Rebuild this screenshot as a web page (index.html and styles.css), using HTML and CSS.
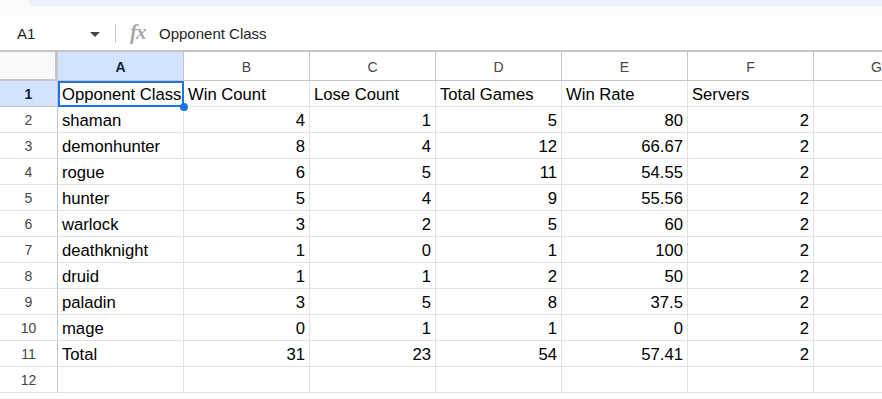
FILE: index.html
```html
<!DOCTYPE html>
<html lang="en">
<head>
    <meta charset="UTF-8">
    <meta name="viewport" content="width=device-width, initial-scale=1.0">
    <title>Opponent Stats</title>
    <link rel="stylesheet" href="styles.css">
</head>
<body>

<div class="topstrip">
    <div class="toolbar"></div>
</div>

<div class="formulabar">
    <div class="namebox">A1</div>
    <div class="dropdown"></div>
    <div class="divider"></div>
    <div class="fx">fx</div>
    <div class="formula">Opponent Class</div>
</div>

<div class="viewport">
<div class="sheet">
    <!-- column headers -->
    <div class="corner"></div>
    <div class="colhead active">A</div>
    <div class="colhead">B</div>
    <div class="colhead">C</div>
    <div class="colhead">D</div>
    <div class="colhead">E</div>
    <div class="colhead">F</div>
    <div class="colhead">G</div>

    <div class="rowhead active">1</div>
    <div class="cell selected">Opponent Class</div>
    <div class="cell">Win Count</div>
    <div class="cell">Lose Count</div>
    <div class="cell">Total Games</div>
    <div class="cell">Win Rate</div>
    <div class="cell">Servers</div>
    <div class="cell"></div>

    <div class="rowhead">2</div>
    <div class="cell">shaman</div>
    <div class="cell num">4</div>
    <div class="cell num">1</div>
    <div class="cell num">5</div>
    <div class="cell num">80</div>
    <div class="cell num">2</div>
    <div class="cell"></div>

    <div class="rowhead">3</div>
    <div class="cell">demonhunter</div>
    <div class="cell num">8</div>
    <div class="cell num">4</div>
    <div class="cell num">12</div>
    <div class="cell num">66.67</div>
    <div class="cell num">2</div>
    <div class="cell"></div>

    <div class="rowhead">4</div>
    <div class="cell">rogue</div>
    <div class="cell num">6</div>
    <div class="cell num">5</div>
    <div class="cell num">11</div>
    <div class="cell num">54.55</div>
    <div class="cell num">2</div>
    <div class="cell"></div>

    <div class="rowhead">5</div>
    <div class="cell">hunter</div>
    <div class="cell num">5</div>
    <div class="cell num">4</div>
    <div class="cell num">9</div>
    <div class="cell num">55.56</div>
    <div class="cell num">2</div>
    <div class="cell"></div>

    <div class="rowhead">6</div>
    <div class="cell">warlock</div>
    <div class="cell num">3</div>
    <div class="cell num">2</div>
    <div class="cell num">5</div>
    <div class="cell num">60</div>
    <div class="cell num">2</div>
    <div class="cell"></div>

    <div class="rowhead">7</div>
    <div class="cell">deathknight</div>
    <div class="cell num">1</div>
    <div class="cell num">0</div>
    <div class="cell num">1</div>
    <div class="cell num">100</div>
    <div class="cell num">2</div>
    <div class="cell"></div>

    <div class="rowhead">8</div>
    <div class="cell">druid</div>
    <div class="cell num">1</div>
    <div class="cell num">1</div>
    <div class="cell num">2</div>
    <div class="cell num">50</div>
    <div class="cell num">2</div>
    <div class="cell"></div>

    <div class="rowhead">9</div>
    <div class="cell">paladin</div>
    <div class="cell num">3</div>
    <div class="cell num">5</div>
    <div class="cell num">8</div>
    <div class="cell num">37.5</div>
    <div class="cell num">2</div>
    <div class="cell"></div>

    <div class="rowhead">10</div>
    <div class="cell">mage</div>
    <div class="cell num">0</div>
    <div class="cell num">1</div>
    <div class="cell num">1</div>
    <div class="cell num">0</div>
    <div class="cell num">2</div>
    <div class="cell"></div>

    <div class="rowhead">11</div>
    <div class="cell">Total</div>
    <div class="cell num">31</div>
    <div class="cell num">23</div>
    <div class="cell num">54</div>
    <div class="cell num">57.41</div>
    <div class="cell num">2</div>
    <div class="cell"></div>

    <div class="rowhead">12</div>
    <div class="cell"></div>
    <div class="cell"></div>
    <div class="cell"></div>
    <div class="cell"></div>
    <div class="cell"></div>
    <div class="cell"></div>
    <div class="cell"></div>
</div>
</div>

</body>
</html>
```

FILE: styles.css
```css
/* spreadsheet view */

body {
    font-family: "Liberation Sans", Arial, sans-serif;
    background-color: #fff;
    margin: 0;
    padding: 0;
    overflow: hidden;
    color: #000;
}

.topstrip {
    height: 16px;
    background-color: #f9fbfd;
}
.toolbar {
    margin-left: 28px;
    height: 6px;
    background-color: #edf2fa;
    border-bottom-left-radius: 12px;
}

.formulabar {
    height: 34px;
    display: flex;
    align-items: center;
    font-size: 15px;
    color: #1f1f1f;
}
.namebox {
    padding-left: 17px;
    width: 73px;
}
.dropdown {
    width: 0;
    height: 0;
    border-left: 5px solid transparent;
    border-right: 5px solid transparent;
    border-top: 5px solid #444746;
    margin-top: 2px;
}
.divider {
    width: 1px;
    height: 19px;
    background-color: #c4c7c5;
    margin-left: 15px;
    margin-right: 14px;
}
.fx {
    font-family: "Liberation Serif", serif;
    font-style: italic;
    font-weight: bold;
    font-size: 21px;
    color: #a8a8a8;
    letter-spacing: -1px;
    width: 29px;
    margin-top: -2px;
}

.viewport {
    width: 882px;
    overflow: hidden;
}
.sheet {
    display: grid;
    grid-template-columns: 58px repeat(7, 126px);
    grid-template-rows: 29px;
    grid-auto-rows: 26px;
    width: 940px;
    border-top: 2px solid #c4c7c5;
}

.corner {
    background-color: #f8f9fa;
    border-right: 3px solid #c4c7c5;
    border-bottom: 4px solid #c4c7c5;
    box-sizing: border-box;
    margin-bottom: -2px;
}
.colhead, .rowhead {
    box-sizing: border-box;
    display: flex;
    align-items: center;
    justify-content: center;
    font-size: 14px;
    color: #444746;
    border-right: 1px solid #c4c7c5;
    border-bottom: 1px solid #c4c7c5;
}
.colhead {
    padding-top: 1px;
}
.rowhead {
    border-bottom-color: #e1e3e1;
    padding-top: 1px;
}
.colhead.active, .rowhead.active {
    background-color: #d3e3fd;
    color: #0b1f3c;
    font-weight: bold;
}
.rowhead.active {
    border-bottom-color: #c4c7c5;
}

.cell {
    box-sizing: border-box;
    display: flex;
    align-items: center;
    padding: 3px 4px 0 4px;
    font-size: 16.67px;
    white-space: nowrap;
    overflow: hidden;
    border-right: 1px solid #e1e1e1;
    border-bottom: 1px solid #e1e1e1;
}
.num {
    justify-content: flex-end;
}
.selected {
    position: relative;
    overflow: visible;
}
.selected::after {
    content: "";
    position: absolute;
    left: 0;
    top: 0;
    right: -1px;
    bottom: -1px;
    border: 2px solid #1a73e8;
    box-sizing: border-box;
}
.selected::before {
    content: "";
    position: absolute;
    right: -5px;
    bottom: -5px;
    width: 8px;
    height: 8px;
    border-radius: 50%;
    background-color: #1a73e8;
    z-index: 1;
}
```
